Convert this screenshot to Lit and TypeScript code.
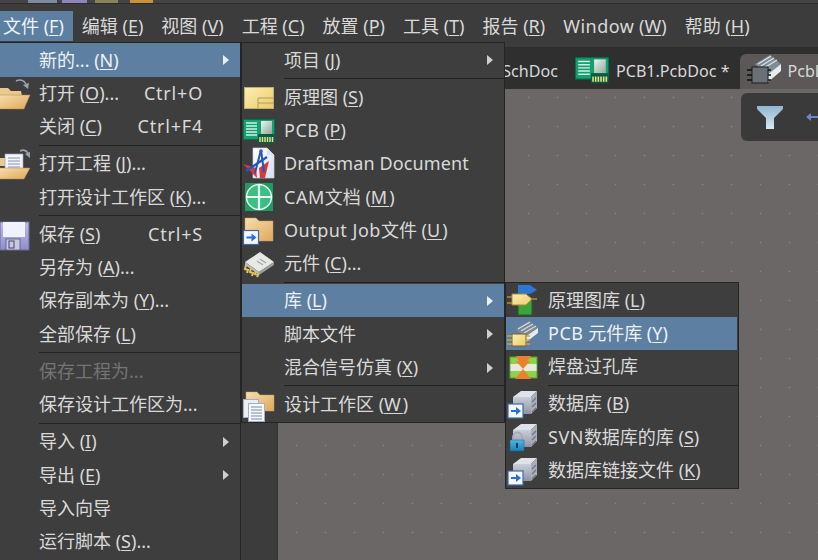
import { LitElement, html, css, svg, nothing } from "lit";
import { customElement } from "lit/decorators.js";

const arrowBox = (x: number, y: number) => svg`<rect x="${x}" y="${y}" width="15" height="14" fill="#f4f7fc" stroke="#3c69ae" stroke-width="1.2"/><path d="M${x + 3} ${y + 6}h5v-3l5 4-5 4v-3h-5z" fill="#2b6fd6"/>`;
const gold = "#e3c35a";
const dbBox = svg`<path d="M6 10 14 4h16l-6 6z" fill="#dfe2e8"/><path d="M6 10h18v17H6z" fill="url(#db)"/><path d="M24 10l6-6v17l-6 6z" fill="#a9aeba"/><path d="M25 15l4-4M25 20l4-4M25 25l4-4" stroke="#6e7484" stroke-width="1.200"/>`;

const ICONS: Record<string, unknown> = {
  open: svg`<path d="M1 11h9l3 3h10l1 5H1z" fill="#e8c98e"/><path d="M0 18h32l-6 14H0z" fill="url(#folder)" stroke="#a98646" stroke-width=".5"/><path d="M18 4c4-2 8-1 10 3" fill="none" stroke="#99a2ad" stroke-width="1.6"/><path d="M25 8l6-2-1 6z" fill="#99a2ad"/>`,
  openPrj: svg`<path d="M1 11h9l3 3h10l1 5H1z" fill="#e8c98e"/><path d="M7 7h18v17H7z" fill="#f3f5fb" stroke="#9aa3b8" stroke-width=".7"/><path d="M10 11h12M10 14h12M10 17h12M10 20h12" stroke="#8292b4"/><path d="M1 21h31l-6 11H0z" fill="url(#folder)" stroke="#a98646" stroke-width=".5"/><path d="M22 4c4-2 6-1 8 2" fill="none" stroke="#99a2ad" stroke-width="1.6"/><path d="M27 7l5-2v6z" fill="#99a2ad"/>`,
  save: svg`<rect x="2" y="4" width="29" height="28" fill="url(#floppy)" stroke="#6b699f"/><rect x="5" y="4" width="22" height="15" fill="#f1f2fb"/><rect x="8" y="21" width="14" height="11" fill="#c8c9e0" stroke="#55558a" stroke-width=".8"/><rect x="11" y="23" width="5" height="7" fill="none" stroke="#444470"/>`,
  sch: svg`<rect x="1.5" y="6.5" width="29" height="21" fill="url(#sch)" stroke="#c2ad73"/><path d="M15 27v-10h15.500M15 22h15.500" fill="none" stroke="#b09a5c"/>`,
  pcb: svg`<rect x="0.500" y="5.500" width="31" height="20" fill="#12a271" stroke="#0c6d52"/><path d="M3 9h11M3 12h11M3 15h11M3 18h11M3 21h11" stroke="#d5efe4" stroke-width="1.300"/><rect x="18" y="7" width="11" height="13" fill="url(#chip)"/><rect x="15" y="20" width="16.500" height="9.500" fill="#0b5a44"/><path d="M17 23v5M19.500 23v5M22 23v5M24.500 23v5M27 23v5M29.500 23v5" stroke="#e9e27a" stroke-width="1.500"/>`,
  draft: svg`<path d="M10 1h14l7 7v23H10z" fill="url(#page)" stroke="#c9d3e4" stroke-width=".7"/><path d="M24 1v7h7" fill="#dbe3ef"/><path d="M0 17l13 4 1 10z" fill="#d63a3a"/><path d="M16 21l10-7-4 17h-5z" fill="#d63a3a"/><path d="M18 3 12 26M18 3l3 22" stroke="#2456b8" stroke-width="2" fill="none"/><path d="M3 24 24 10" stroke="#2456b8" stroke-width="2.200"/><circle cx="18" cy="4" r="1.800" fill="#385fa8"/>`,
  cam: svg`<rect x="2" y="3" width="28" height="28" fill="#1f9c64"/><circle cx="16" cy="17" r="12.500" fill="#3cbf85" stroke="#e6f6ee" stroke-width="1.500"/><path d="M16 4v26M3 17h26" stroke="#edf9f3" stroke-width="2.200"/>`,
  output: svg`<g transform="translate(-1 -4)"><path d="M3 8h11l3 3h14v20H3z" fill="url(#folder)" stroke="#c79f5d" stroke-width=".5"/></g>${arrowBox(0.5, 16.5)}`,
  comp: svg`<path d="M2 15 17 5l14 10-15 10z" fill="#e6e9e6"/><path d="M2 15l14 10v3L2 18z" fill="#b6bbb4"/><path d="M16 25l15-10v3L16 28z" fill="#9aa09a"/><path d="M17 12l6 4M14 14l6 4" stroke="#a3a9a3" stroke-width="1.300"/><path d="M3 18l-1 4 3 1-1 3M8 21l-1 4 3 1-1 3M13 24l-1 3 3 1-1 2" fill="none" stroke="${gold}" stroke-width="2"/>`,
  workspace: svg`<g transform="translate(0 -1)"><path d="M3 5h11l3 3h14v16H3z" fill="url(#folder)" stroke="#c79f5d" stroke-width=".5"/></g><rect x="0.500" y="11.500" width="15" height="18" fill="#e9eef7" stroke="#9fb0c7"/><rect x="5.500" y="15.500" width="16" height="18" fill="#f6f8fc" stroke="#9fb0c7"/><path d="M8 19h11M8 22h11M8 25h11M8 28h11M8 31h11" stroke="#7488aa"/>`,
  schlib: svg`<path d="M11 2h12l7 5-7 4H11z" fill="#2d77d2"/><rect x="11" y="17" width="14" height="15" fill="#3ca33a" stroke="#275f25"/><path d="M5 11h14l6 5-6 6H5z" fill="url(#sch)" stroke="#a98a36"/><path d="M0 14h5M0 20h5M25 16h5" stroke="#b0902f" stroke-width="1.500"/>`,
  pcblib: svg`<path d="M8 12 22 4l9 7-13 9z" fill="#7c8894"/><path d="M11 12l12-7M14 14l12-7M17 16l12-7" stroke="#d6dce2" stroke-width="1.100"/><path d="M18 20l13-9v5l-13 10z" fill="#e8ecef"/><rect x="5" y="17" width="14" height="12" fill="url(#sch)" stroke="#7a6526"/><path d="M0 19h5M0 23h5M0 27h5M19 19h4M19 23h4M19 27h4" stroke="#c2a644" stroke-width="1.300"/>`,
  padlib: svg`<rect x="3" y="7" width="27" height="21" fill="#8ed14a" stroke="#5a9b2a"/><rect x="3.500" y="14" width="26" height="7" fill="#e8e8de"/><path d="M9 6h15l-4 5h3l-7 8-7-8h3zM16 19l8 10H8z" fill="#ee7f2c"/>`,
  db: svg`${dbBox}${arrowBox(1, 17)}`,
  svn: svg`${dbBox}<path d="M6 20v-3a4.500 4.500 0 0 1 9 0v3" fill="none" stroke="#a5acb8" stroke-width="1.800"/><rect x="3" y="20" width="14" height="11" fill="url(#lock)" stroke="#0f638f" stroke-width=".5"/><rect x="9" y="23" width="2" height="5" fill="#063a56"/>`,
};

type Row = { l?: string; i?: string; s?: string; sub?: boolean; sel?: boolean; off?: boolean; sep?: boolean };
const SEP: Row = { sep: true };

const M1: Row[] = [
  { l: "新的... (&N)", sub: true, sel: true },
  { l: "打开 (&O)...", i: "open", s: "Ctrl+O" },
  { l: "关闭 (&C)", s: "Ctrl+F4" },
  SEP,
  { l: "打开工程 (&J)...", i: "openPrj" },
  { l: "打开设计工作区 (&K)..." },
  SEP,
  { l: "保存 (&S)", i: "save", s: "Ctrl+S" },
  { l: "另存为 (&A)..." },
  { l: "保存副本为 (&Y)..." },
  { l: "全部保存 (&L)" },
  SEP,
  { l: "保存工程为...", off: true },
  { l: "保存设计工作区为..." },
  SEP,
  { l: "导入 (&I)", sub: true },
  { l: "导出 (&E)", sub: true },
  { l: "导入向导" },
  { l: "运行脚本 (&S)..." },
];
const M2: Row[] = [
  { l: "项目 (&J)", sub: true },
  SEP,
  { l: "原理图 (&S)", i: "sch" },
  { l: "PCB (&P)", i: "pcb" },
  { l: "Draftsman Document", i: "draft" },
  { l: "CAM文档 (&M)", i: "cam" },
  { l: "Output Job文件 (&U)", i: "output" },
  { l: "元件 (&C)...", i: "comp" },
  SEP,
  { l: "库 (&L)", sub: true, sel: true },
  { l: "脚本文件", sub: true },
  { l: "混合信号仿真 (&X)", sub: true },
  SEP,
  { l: "设计工作区 (&W)", i: "workspace" },
];
const M3: Row[] = [
  { l: "原理图库 (&L)", i: "schlib" },
  { l: "PCB 元件库 (&Y)", i: "pcblib", sel: true },
  { l: "焊盘过孔库", i: "padlib" },
  SEP,
  { l: "数据库 (&B)", i: "db" },
  { l: "SVN数据库的库 (&S)", i: "svn" },
  { l: "数据库链接文件 (&K)", i: "db" },
];
const BAR = ["文件 (&F)", "编辑 (&E)", "视图 (&V)", "工程 (&C)", "放置 (&P)", "工具 (&T)", "报告 (&R)", "Window (&W)", "帮助 (&H)"];
const TOP = [
  { w: 29, m: 28, c: "#7d8aa0" },
  { w: 25, m: 5, c: "#8d86b8" },
  { w: 23, m: 8, c: "#8a8455" },
  { w: 23, m: 12, c: "#c9923a" },
];

/* Wide Latin runs get a little tracking, to follow the reference's wider Latin face. */
function runs(s: string) {
  return s
    .split(/(CAM|SVN|PCB|Window|Output Job|Draftsman Document)/)
    .map((p, i) => (i % 2 ? html`<span class="${p.startsWith("Draft") ? "lat-s" : "lat"}">${p}</span>` : p));
}
function label(s: string) {
  const i = s.indexOf("&");
  if (i < 0) return runs(s);
  const k = s[i + 1];
  const wide = k === "M" || k === "W" || k === "U";
  return html`${runs(s.slice(0, i))}<u class="${wide ? "wide" : ""}">${k}</u>${s.slice(i + 2)}`;
}

@customElement("app-root")
export class AppRoot extends LitElement {
  static styles = css`
    :host {
      display: block;
      position: relative;
      width: 818px;
      height: 560px;
      overflow: hidden;
      background: #3c3c3c;
      color: #d9d9d9;
      font: 18px/1 "Noto Sans", "Noto Sans CJK SC", sans-serif;
    }
    u { text-underline-offset: 2px; text-decoration-thickness: 1px; }
    u.wide { letter-spacing: 2px; }
    .bar u.wide { letter-spacing: 0; }
    .lat { letter-spacing: .5px; }
    .lat-s { letter-spacing: .12px; }
    .defs { display: block; width: 0; height: 0; }
    .top { height: 3px; display: flex; border-bottom: 1px solid #2c2c2c; box-sizing: content-box; background: #454545; }
    .top i { display: block; height: 3px; }
    .bar { height: 43px; display: flex; align-items: flex-start; padding-top: 7px; box-sizing: border-box; margin-left: -6px; }
    .bar div { height: 30px; padding: 0 9px; display: flex; align-items: center; white-space: pre; }
    .bar .on { background: #5d7fa1; color: #eef2f6; }
    .tabs { height: 42px; background: #2f2f2f; display: flex; align-items: flex-end; padding-left: 446px; overflow: hidden; white-space: pre; font-size: 16.100px; }
    .tab { height: 35px; display: flex; align-items: center; gap: 7px; flex: none; }
    .tab.plain { margin-right: 17px; }
    .tab.act { background: #5b5857; border-radius: 6px 0 0 0; padding-left: 7px; margin-left: -7px; width: 90px; overflow: hidden; }
    .tab svg { width: 34px; height: 30px; flex: none; margin-top: -3px; }
    .work { height: 471px; display: grid; grid-template-columns: 278px 1fr; }
    .side { background: #3c3c3c; border-right: 1px solid #333; display: flex; flex-direction: column; padding-top: 335px; gap: 7px; }
    .side b { display: block; border: 1px solid #2a2a2a; border-left: 0; border-radius: 0 4px 4px 0; background: #363636; width: 19px; height: 32px; }
    .side .s2 { width: 7px; height: 40px; background: #4f4f4f; border-color: #2f2f2f; }
    .side .s3 { margin-top: 46px; height: 20px; }
    .canvas {
      background-color: #6b6766;
      background-image: radial-gradient(circle, #85817f 0.8px, transparent 1.1px);
      background-size: 29px 29px;
      background-position: 4px -6px;
      padding: 4px 0 0 463px;
      overflow: hidden;
    }
    .panel { width: 90px; height: 48px; background: #3a3a3a; border-radius: 6px 0 0 6px; display: flex; align-items: center; padding: 0 0 0 16px; gap: 23px; }
    .panel svg { flex: none; display: block; }
    .menu { position: absolute; box-sizing: border-box; background: #3e3e3e; border: 1px solid #252525; padding-top: .4px; }
    .m1 { left: -4px; top: 42px; width: 245px; height: 530px; }
    .m2 { left: 241px; top: 42px; width: 264px; height: 381px; }
    .m3 { left: 505px; top: 282px; width: 234px; height: 207px; }
    .row { height: 33.250px; display: flex; align-items: center; position: relative; white-space: pre; padding: 0 0 1px 42px; box-sizing: border-box; }
    .row.sel { background: #5d7fa1; color: #edf1f5; }
    .m3 .row.sel { margin-right: 1px; }
    .row.off { color: #747474; }
    .row svg.ic { position: absolute; left: 1px; top: 0; width: 36px; height: 33px; overflow: visible; }
    .row .sc { position: absolute; right: 37px; letter-spacing: .8px; }
    .row .ar { position: absolute; right: 11px; top: 12px; width: 0; height: 0; border-left: 6px solid #eee; border-top: 5px solid transparent; border-bottom: 5px solid transparent; }
    .row.sub:not(.sel) .ar { border-left-color: #cfcfcf; }
    .sep { height: 4px; padding-left: 42px; display: flex; align-items: center; }
    .sep::after { content: ""; flex: 1; height: 1px; background: #222; }
  `;

  private menu(cls: string, rows: Row[]) {
    return html`<div class="menu ${cls}">
      ${rows.map((r) =>
        r.sep
          ? html`<div class="sep"></div>`
          : html`<div class="row ${r.sel ? "sel" : ""} ${r.off ? "off" : ""} ${r.sub ? "sub" : ""}">
              ${r.i ? html`<svg class="ic" viewBox="0 0 36 33">${ICONS[r.i]}</svg>` : nothing}
              <span>${label(r.l!)}</span>
              ${r.s ? html`<span class="sc">${r.s}</span>` : nothing}
              ${r.sub ? html`<span class="ar"></span>` : nothing}
            </div>`
      )}
    </div>`;
  }

  render() {
    return html`
      <svg class="defs">
        <defs>
          <linearGradient id="folder" x1="0" y1="0" x2="1" y2="1"><stop offset="0" stop-color="#f8dfae"/><stop offset="1" stop-color="#e0a75a"/></linearGradient>
          <linearGradient id="sch" x1="0" y1="0" x2="1" y2="1"><stop offset="0" stop-color="#fbeeb4"/><stop offset="1" stop-color="#eccb68"/></linearGradient>
          <linearGradient id="chip" x1="0" y1="0" x2="1" y2="1"><stop offset="0" stop-color="#eef2f0"/><stop offset="1" stop-color="#8fa89e"/></linearGradient>
          <linearGradient id="page" x1="0" y1="0" x2="1" y2="1"><stop offset="0" stop-color="#ffffff"/><stop offset="1" stop-color="#d5e0f2"/></linearGradient>
          <linearGradient id="floppy" x1="0" y1="0" x2="0" y2="1"><stop offset="0" stop-color="#bcbde6"/><stop offset="1" stop-color="#8f8fc8"/></linearGradient>
          <linearGradient id="db" x1="0" y1="0" x2="0" y2="1"><stop offset="0" stop-color="#c9ced8"/><stop offset="1" stop-color="#8e94a4"/></linearGradient>
          <linearGradient id="lock" x1="0" y1="0" x2="0" y2="1"><stop offset="0" stop-color="#4fb6e4"/><stop offset="1" stop-color="#1b7fb4"/></linearGradient>
          <linearGradient id="fil" x1="0" y1="0" x2="0" y2="1"><stop offset="0" stop-color="#8fb6cf"/><stop offset="1" stop-color="#d8e8f2"/></linearGradient>
        </defs>
      </svg>
      <div class="top">${TOP.map((t) => html`<i style="width:${t.w}px;margin-left:${t.m}px;background:${t.c}"></i>`)}</div>
      <div class="bar">${BAR.map((b, i) => html`<div class="${i === 0 ? "on" : ""}">${label(b)}</div>`)}</div>
      <div class="tabs">
        <div class="tab plain"><span>Sheet1.SchDoc</span></div>
        <div class="tab plain">
          <svg viewBox="0 3 32 28">${ICONS.pcb}</svg><span>PCB1.PcbDoc *</span>
        </div>
        <div class="tab act">
          <svg viewBox="0 0 34 30">
            <path d="M8 9 23 0l11 9-14 11z" fill="#7f8d99"/>
            <path d="M11 9l13-8M14 11l13-8M17 13l13-8" stroke="#dfe5ea" stroke-width="1.100"/>
            <path d="M20 20l14-11v7L20 28z" fill="#e8ecef"/>
            <rect x="5" y="12" width="16" height="16" fill="#6a7078" stroke="#1c1c1c"/>
            <path d="M0 15h5M0 20h5M0 25h5M21 15h3M21 20h3M21 25h3" stroke="#111" stroke-width="1.300"/>
          </svg>
          <span>PcbLib1.PcbLib</span>
        </div>
      </div>
      <div class="work">
        <div class="side"><b></b><b class="s2"></b><b class="s3"></b></div>
        <div class="canvas">
          <div class="panel">
            <svg width="26" height="23" viewBox="0 0 26 23"><path d="M0 0h26v3l-9 9v11H9V12L0 3z" fill="url(#fil)"/></svg>
            <svg width="14" height="10" viewBox="0 0 14 10"><path d="M0 5l5-4v3h9v2H5v3z" fill="#6f86c9"/></svg>
          </div>
        </div>
      </div>
      ${this.menu("m1", M1)} ${this.menu("m2", M2)} ${this.menu("m3", M3)}
    `;
  }
}
